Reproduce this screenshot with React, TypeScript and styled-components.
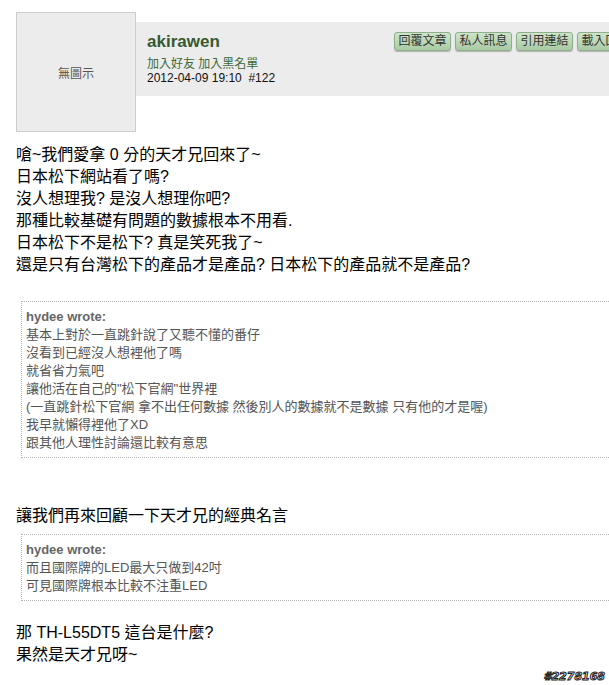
import { createGlobalStyle, styled } from 'styled-components';

const GlobalStyle = createGlobalStyle`
  html, body {
    margin: 0;
    padding: 0;
    background: #fff;
    overflow: hidden;
  }
  body {
    font-family: "Liberation Sans", "Noto Sans CJK TC", sans-serif;
    color: #000;
  }
`;

const Page = styled.div`
  width: 609px;
  overflow: hidden;
  padding: 12px 0 0 16px;
  box-sizing: border-box;
`;

const Header = styled.div`
  display: flex;
  align-items: flex-start;
`;

const Avatar = styled.div`
  flex: none;
  width: 118px;
  height: 118px;
  border: 1px solid #cccccc;
  background: #ececec;
  display: flex;
  align-items: center;
  justify-content: center;
  font-size: 12px;
  color: #555;
`;

const InfoBar = styled.div`
  flex: 1;
  min-width: 0;
  margin-top: 10px;
  height: 74px;
  box-sizing: border-box;
  padding: 10px 0 0 11px;
  background: #ececec;
  display: flex;
  align-items: flex-start;
`;

const UserInfo = styled.div`
  flex: none;
  width: 247px;
  display: flex;
  flex-direction: column;
`;

const UserName = styled.div`
  font-size: 17px;
  line-height: 20px;
  font-weight: bold;
  color: #37592f;
`;

const UserLinks = styled.div`
  margin-top: 6px;
  font-size: 12px;
  line-height: 12px;
  color: #3d6a36;
  white-space: pre;
`;

const PostDate = styled.div`
  margin-top: 1px;
  font-size: 12px;
  line-height: 14px;
  color: #111;
  white-space: pre;
`;

const ButtonRow = styled.div`
  flex: none;
  display: flex;
  gap: 4px;
`;

const ActionButton = styled.button`
  width: 57px;
  height: 19px;
  padding: 0;
  border: 1px solid #8fae8b;
  border-radius: 3px;
  background: linear-gradient(#cde5c9, #a9caa5);
  box-shadow: 0 1px 1px rgba(0, 0, 0, 0.25);
  font-family: "Liberation Sans", "Noto Sans CJK TC", sans-serif;
  font-size: 12px;
  line-height: 17px;
  color: #333;
  white-space: nowrap;
  overflow: hidden;
`;

const Body = styled.div<{ $gap: number }>`
  margin-top: ${(p) => p.$gap}px;
  font-size: 16px;
  line-height: 22px;
  color: #000;
`;

const Quote = styled.div<{ $gap: number }>`
  margin: ${(p) => p.$gap}px -40px 0 5px;
  border: 1px dotted #b5b5b5;
  padding: 6px 4px 5px;
  font-size: 13px;
  line-height: 18px;
  color: #555;
`;

const QuoteHead = styled.div`
  font-weight: bold;
  color: #666;
`;

const Signature = styled.div`
  margin-top: 4px;
  padding-right: 4px;
  text-align: right;
  font-family: "DejaVu Sans", sans-serif;
  font-size: 11px;
  line-height: 14px;
  font-weight: bold;
  font-style: italic;
  color: #eee;
  -webkit-text-stroke: 1px #222;
`;

const bodyLines = [
  '嗆~我們愛拿 0 分的天才兄回來了~',
  '日本松下網站看了嗎?',
  '沒人想理我? 是沒人想理你吧?',
  '那種比較基礎有問題的數據根本不用看.',
  '日本松下不是松下? 真是笑死我了~',
  '還是只有台灣松下的產品才是產品? 日本松下的產品就不是產品?',
];

const quoteOne = [
  '基本上對於一直跳針說了又聽不懂的番仔',
  '沒看到已經沒人想裡他了嗎',
  '就省省力氣吧',
  '讓他活在自己的"松下官網"世界裡',
  '(一直跳針松下官網 拿不出任何數據 然後別人的數據就不是數據 只有他的才是喔)',
  '我早就懶得裡他了XD',
  '跟其他人理性討論還比較有意思',
];

const quoteTwo = ['而且國際牌的LED最大只做到42吋', '可見國際牌根本比較不注重LED'];

const buttons = ['回覆文章', '私人訊息', '引用連結', '載入回應'];

const App = () => {
  return (
    <>
      <GlobalStyle />
      <Page>
        <Header>
          <Avatar>無圖示</Avatar>
          <InfoBar>
            <UserInfo>
              <UserName>akirawen</UserName>
              <UserLinks>加入好友 加入黑名單</UserLinks>
              <PostDate>2012-04-09 19:10  #122</PostDate>
            </UserInfo>
            <ButtonRow>
              {buttons.map((b) => (
                <ActionButton key={b}>{b}</ActionButton>
              ))}
            </ButtonRow>
          </InfoBar>
        </Header>

        <Body $gap={12}>
          {bodyLines.map((l) => (
            <div key={l}>{l}</div>
          ))}
        </Body>

        <Quote $gap={25}>
          <QuoteHead>hydee wrote:</QuoteHead>
          {quoteOne.map((l) => (
            <div key={l}>{l}</div>
          ))}
        </Quote>

        <Body $gap={47}>讓我們再來回顧一下天才兄的經典名言</Body>

        <Quote $gap={7}>
          <QuoteHead>hydee wrote:</QuoteHead>
          {quoteTwo.map((l) => (
            <div key={l}>{l}</div>
          ))}
        </Quote>

        <Body $gap={21}>
          <div>那 TH-L55DT5 這台是什麼?</div>
          <div>果然是天才兄呀~</div>
        </Body>

        <Signature>#2278168</Signature>
      </Page>
    </>
  );
};

export default App;
